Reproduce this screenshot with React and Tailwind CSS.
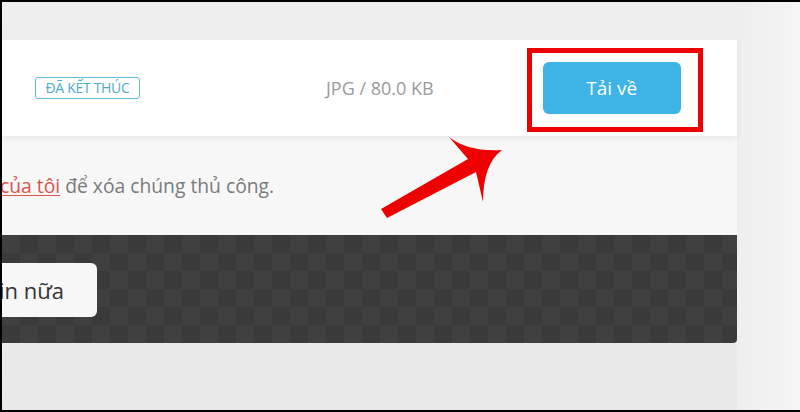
import React from "react";

const Arrow = () => (
  <svg
    className="absolute left-[370px] top-[125px] w-[140px] h-[100px]"
    viewBox="370 125 140 100"
  >
    <path
      d="M379 207 L466 157 L447 135 Q466 150 500 148 Q481 162 481 200 L474 170 L385 216 Z"
      fill="#ee0000"
    />
  </svg>
);

const App = () => {
  return (
    <div className="relative w-[800px] h-[412px] overflow-hidden border-t-2 border-l-2 border-b-2 border-black bg-gradient-to-b from-[#eeeeee] to-[#e9e9e9] font-['Open_Sans',sans-serif]">
      <div className="flex h-full">
        <div className="flex flex-col w-[735px] shadow-[6px_0_10px_rgba(0,0,0,0.04)]">
          <div className="h-[38px]" />

          {/* file row */}
          <div className="relative z-10 flex items-start h-[96px] bg-white shadow-[0_3px_6px_rgba(0,0,0,0.06)]">
            <div className="mt-[37px] ml-[33px] w-[105px] h-[22px] flex items-center justify-center border border-[#62bcd8] rounded-[3px] text-[14px] text-[#4faccc] leading-none tracking-[-0.3px]">
              ĐÃ KẾT THÚC
            </div>
            <div className="mt-[39px] ml-[186px] text-[18px] text-[#9a9a9a] leading-none">
              JPG / 80.0 KB
            </div>
            <div className="mt-[8px] ml-[93px] pl-[11px] pr-[17px] pt-[9px] pb-[13px] border-[5px] border-[#ee0000] w-[176px] h-[84px] flex">
              <div className="flex-1 flex items-center justify-center bg-[#3db3e6] rounded-[6px] text-white text-[19px]">
                Tải về
              </div>
            </div>
          </div>

          {/* note */}
          <div className="h-[99px] bg-[#f7f7f7] pt-[36px] -ml-[2px] text-[19.3px] text-[#7a7a7a]">
            <a className="text-[#d9534f] underline underline-offset-2">của tôi</a>{" "}
            để xóa chúng thủ công.
          </div>

          {/* checker preview */}
          <div className="h-[108px] pt-[28px] rounded-br-[4px] bg-[image:repeating-conic-gradient(#3a3a3a_0%_25%,#404040_0%_50%)] bg-[length:36px_36px]">
            <div className="w-[95px] h-[54px] flex items-center bg-[#f7f7f7] rounded-r-[6px] overflow-hidden">
              <span className="-ml-[3px] text-[22px] text-[#333]">in nữa</span>
            </div>
          </div>
        </div>
        <div className="flex-1 bg-gradient-to-r from-[#eeeeee] to-[#f5f5f5]" />
      </div>
      <Arrow />
    </div>
  );
};

export default App;
